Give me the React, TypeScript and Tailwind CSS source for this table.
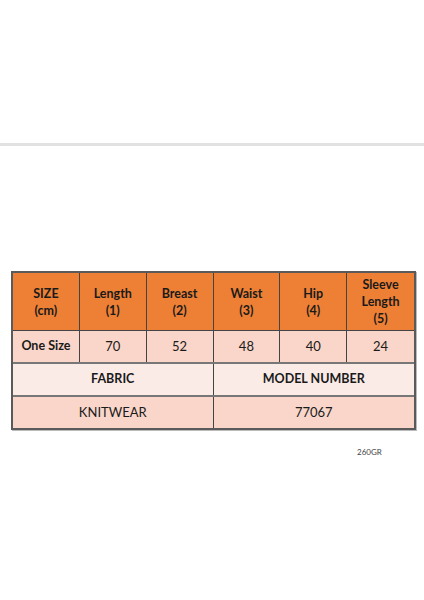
import React from "react";

const font = { fontFamily: "Lato, 'Open Sans', sans-serif" };

export default function App() {
  const head = ["SIZE|(cm)", "Length|(1)", "Breast|(2)", "Waist|(3)", "Hip|(4)", "Sleeve|Length|(5)"];
  const vals = ["70", "52", "48", "40", "24"];
  return (
    <div className="w-[424px] h-[600px] bg-white overflow-hidden text-[#1a1a1a]" style={font}>
      <div className="h-[143px]" />
      <div className="h-[3px] bg-[#e1e1e1]" />
      <div className="h-[125px]" />
      <div className="ml-[11px] w-[405px] border-2 border-[#5a5a5a] shadow-[1px_1px_0_#bbb]">
        <div className="grid grid-cols-6 bg-[#ee8035] h-[58px] border-b border-[#444]">
          {head.map((h, i) => (
            <div
              key={i}
              className={`flex flex-col items-center justify-center font-bold text-[12.5px] leading-[17px] ${i < 5 ? "border-r border-[#444]" : ""}`}
            >
              {h.split("|").map((l, j) => (
                <span key={j}>{l}</span>
              ))}
            </div>
          ))}
        </div>
        <div className="grid grid-cols-6 bg-[#f9d6c9] h-[33px] border-b-2 border-[#777]">
          <div className="flex items-center justify-center font-bold text-[12.5px] border-r border-[#444]">One Size</div>
          {vals.map((v, i) => (
            <div
              key={i}
              className={`flex items-center justify-center text-[13px] ${i < 4 ? "border-r border-[#444]" : ""}`}
            >
              {v}
            </div>
          ))}
        </div>
        <div className="grid grid-cols-2 bg-[#fbebe7] h-[33px] border-b-2 border-[#777]">
          <div className="flex items-center justify-center font-bold text-[12.5px] border-r border-[#444]">FABRIC</div>
          <div className="flex items-center justify-center font-bold text-[12.5px]">MODEL NUMBER</div>
        </div>
        <div className="grid grid-cols-2 bg-[#f9d6c9] h-[31px]">
          <div className="flex items-center justify-center text-[13px] border-r border-[#444]">KNITWEAR</div>
          <div className="flex items-center justify-center text-[13px]">77067</div>
        </div>
      </div>
      <div className="mt-[17px] ml-[357px] text-[8px] leading-[10px] text-[#444]">260GR</div>
    </div>
  );
}
